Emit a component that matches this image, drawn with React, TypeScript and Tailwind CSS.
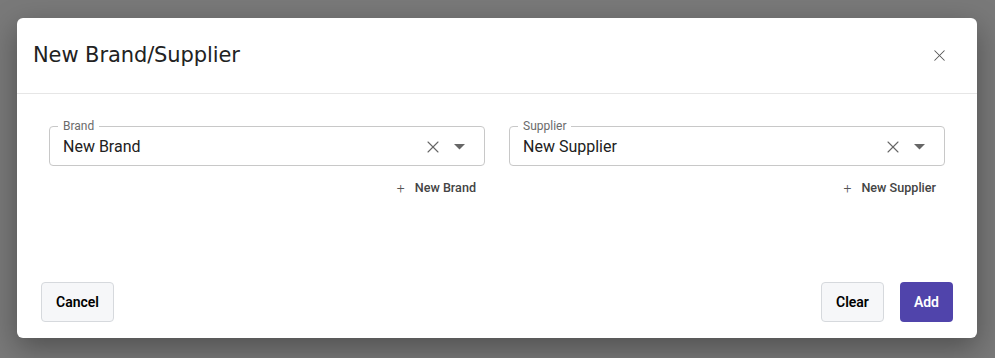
import { X } from "lucide-react";

function ComboField({ label, value }: { label: string; value: string }) {
  return (
    <div className="flex-1 flex flex-col">
      <fieldset className="border border-[#c8c8c8] rounded-[4px] pl-[8px] pr-[19px] pb-[8px] pt-0 h-[47px] flex flex-col">
        <legend className="px-[5px] text-[12px] leading-[14px] text-[#6b6b6b] font-[Roboto,sans-serif]">
          {label}
        </legend>
        <div className="flex items-center pl-[5px] mt-[3px]">
          <span className="flex-1 text-[16px] leading-[22px] text-[#212121] font-[Roboto,sans-serif]">
            {value}
          </span>
          <X size={20} strokeWidth={1.3} className="text-[#666]" />
          <svg width="11" height="6" viewBox="0 0 11 6" className="ml-[11px]">
            <path d="M0 0 L11 0 L5.5 5.5 Z" fill="#666" />
          </svg>
        </div>
      </fieldset>
      <div className="flex justify-end items-center gap-[10px] mt-[13px] pr-[9px] text-[12.6px] font-medium text-[#444] font-[Roboto,sans-serif]">
        <span className="text-[14px] font-light text-[#555] leading-none">+</span>
        <span>New {label}</span>
      </div>
    </div>
  );
}

export default function App() {
  return (
    <div className="w-full h-[358px] bg-[#797979] pt-[18px] pl-[17px] font-[Roboto,sans-serif]">
      <div className="w-[960px] h-[320px] bg-white rounded-[6px] shadow-[0_10px_30px_rgba(0,0,0,0.35)] flex flex-col">
        <div className="h-[76px] flex items-center justify-between pl-[16px] pr-[28px] border-b border-[#e6e6e6]">
          <h2 className="text-[21px] text-[#222] font-['DejaVu_Sans',sans-serif] tracking-[-0.1px]">
            New Brand/Supplier
          </h2>
          <X size={19} strokeWidth={1.3} className="text-[#555]" />
        </div>
        <div className="flex-1 flex gap-[24px] px-[32px] pt-[25px]">
          <ComboField label="Brand" value="New Brand" />
          <ComboField label="Supplier" value="New Supplier" />
        </div>
        <div className="flex items-center justify-between px-[24px] pb-[16px]">
          <button className="h-[40px] px-[14px] rounded-[4px] border border-[#d6d9dd] bg-[#f6f7f9] text-[14px] font-semibold text-black">
            Cancel
          </button>
          <div className="flex gap-[16px]">
            <button className="h-[40px] px-[14px] rounded-[4px] border border-[#d6d9dd] bg-[#f6f7f9] text-[14px] font-semibold text-black">
              Clear
            </button>
            <button className="h-[40px] px-[14px] rounded-[4px] bg-[#5044ab] text-[14px] font-semibold text-white">
              Add
            </button>
          </div>
        </div>
      </div>
    </div>
  );
}
